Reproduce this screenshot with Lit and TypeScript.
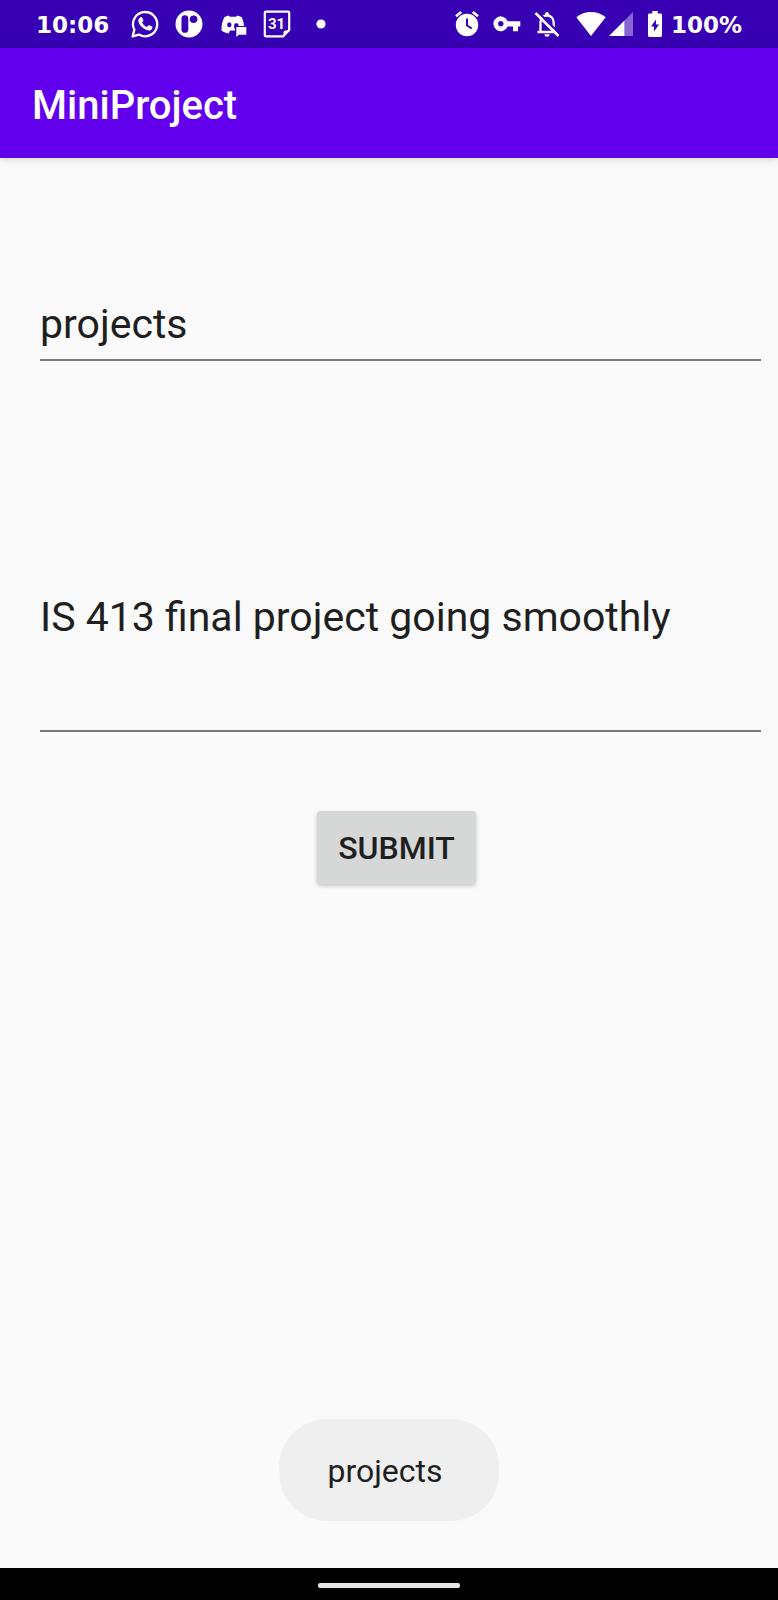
import { LitElement, html, css } from "lit";
import { customElement, state } from "lit/decorators.js";

@customElement("status-bar")
class StatusBar extends LitElement {
  static styles = css`
    :host {
      display: flex;
      justify-content: space-between;
      align-items: center;
      height: 48px;
      padding: 0 36px;
      background: #3700b3;
      color: #fff;
      font: bold 23px/28px "DejaVu Sans", sans-serif;
    }
    .group {
      display: flex;
      align-items: center;
    }
    .left {
      gap: 16px;
    }
    .time {
      margin-right: 6px;
    }
    .text {
      padding-top: 2px;
    }
    .right {
      gap: 12px;
    }
    .network {
      gap: 3px;
      margin: 0 3px;
    }
    .battery {
      gap: 9px;
    }
    svg {
      display: block;
      flex: none;
      fill: #fff;
    }
    .line {
      fill: none;
      stroke: #fff;
    }
    .cut {
      fill: #3700b3;
    }
    .cut-line {
      fill: none;
      stroke: #3700b3;
    }
    .dim {
      opacity: 0.4;
    }
    .day {
      font: bold 15px "Roboto", sans-serif;
      text-anchor: middle;
    }
  `;

  render() {
    return html`
      <div class="group left">
        <span class="time text">10:06</span>
        <svg width="28" height="28" viewBox="0 0 28 28" aria-label="WhatsApp">
          <path class="line" stroke-width="2.3" stroke-linejoin="round" d="M1.6 26.4 3.4 19.8A12.1 12.1 0 1 1 8 24.6Z" />
          <path d="M9.6 7.2c.5-.4 1.100-.3 1.500.3l1.200 2.600c.2.5.1.8-.2 1.200l-1 1.200c1.100 2.100 2.700 3.600 4.900 4.500l1.300-1.500c.3-.4.7-.4 1.100-.2l2.600 1.300c.5.3.5.6.4 1.100-.4 2-2 2.900-3.900 2.800-4.700-.6-9.500-5.100-10.200-9.400-.1-1.600.9-3.100 2.300-3.900Z" />
        </svg>
        <svg width="28" height="28" viewBox="0 0 28 28" aria-label="App">
          <circle cx="14" cy="14" r="13.500" />
          <rect class="cut" x="6.500" y="5.300" width="6.800" height="17.500" rx="3.400" />
          <circle class="cut" cx="18.600" cy="9.300" r="3.800" />
        </svg>
        <svg width="28" height="28" viewBox="0 0 28 28" aria-label="Discord">
          <path d="M9.500 5.500 11 6.700h6l1.500-1.200 4 1.500c1.500 2.500 2.300 5.500 2.500 9H16v4.500h-5L9.700 23.500C7 23 5 22.300 2.500 20.500c-.2-5.500.8-9.500 3-13.500Z" />
          <ellipse class="cut" cx="10.300" cy="14.800" rx="2.200" ry="2.500" />
          <path class="cut" d="M15.200 18.500v-4c.4-1.500 3.800-1.600 4.300 0v1.500H16.600v2.500Z" />
          <path d="M17.300 17h10v7.800H19.800l-2.500 2.200Z" />
        </svg>
        <svg width="28" height="28" viewBox="0 0 28 28" aria-label="Calendar">
          <path class="line" stroke-width="2.200" stroke-linejoin="round" d="M3 1.600h22a1.200 1.200 0 0 1 1.200 1.200V20L20 26.400H3a1.200 1.200 0 0 1-1.200-1.200V2.800A1.200 1.200 0 0 1 3 1.600Z" />
          <path d="M26 20.500 20.500 26v-3.500a2 2 0 0 1 2-2Z" />
          <text class="day" x="13.500" y="19">31</text>
        </svg>
        <svg width="28" height="28" viewBox="0 0 28 28" aria-label="More">
          <circle cx="14" cy="14" r="4.600" />
        </svg>
      </div>
      <div class="group right">
        <svg width="28" height="28" viewBox="0 0 28 28" aria-label="Alarm">
          <circle cx="14" cy="15" r="11.200" />
          <path class="line" stroke-width="2.600" d="M3 6.300 8.200 2M25 6.300 19.800 2" />
          <path class="cut-line" stroke-width="2" d="M14 8.500V15.500l4.800 3" />
        </svg>
        <svg width="28" height="28" viewBox="0 0 28 28" aria-label="VPN">
          <path fill-rule="evenodd" d="M14.700 11.200A7.400 7.400 0 1 0 14.700 16.400H20V21.200h5v-4.800h2.300v-5.200ZM7.800 11a2.700 2.700 0 1 1 0 5.400 2.700 2.700 0 0 1 0-5.400Z" />
        </svg>
        <svg width="28" height="28" viewBox="0 0 28 28" aria-label="Notifications off">
          <path class="line" stroke-width="2.300" d="M7.500 22V13c0-5 2.500-7.500 6.500-7.500s6.700 3 6.700 7.500v9M4.500 22h19" />
          <path d="M12.200 5.500V3.800a1.800 1.800 0 0 1 3.600 0v1.700ZM11.500 24.300h5a2.500 2.500 0 0 1-5 0Z" />
          <path class="cut-line" stroke-width="2.200" d="M4.500 1.500 27.500 24.500" />
          <path class="line" stroke-width="2.500" d="M2.500 3 25.500 26" />
        </svg>
        <div class="group network">
          <svg width="30" height="26" viewBox="0 0 30 26" aria-label="Wi-Fi">
            <path d="M15 25 .3 6.300C8.500-.8 21.500-.8 29.700 6.300Z" />
          </svg>
          <svg width="24" height="24" viewBox="0 0 24 24" aria-label="Signal">
            <path d="M0 24 15.500 8.500V24Z" />
            <path class="dim" d="M15.500 8.500 24 0V24H15.500Z" />
          </svg>
        </div>
        <div class="group battery">
          <svg width="14" height="26" viewBox="0 0 14 26" aria-label="Charging">
            <path fill-rule="evenodd" d="M4.300 0h5.400v2.500h2.800A1.400 1.400 0 0 1 14 3.900v20.700A1.400 1.400 0 0 1 12.600 26H1.400A1.400 1.400 0 0 1 0 24.600V3.900a1.400 1.400 0 0 1 1.400-1.400h2.900ZM8 8.500 3 15.500h3V20.500l5-7H8Z" />
          </svg>
          <span class="text">100%</span>
        </div>
      </div>
    `;
  }
}

@customElement("app-root")
class AppRoot extends LitElement {
  static styles = css`
    :host {
      display: flex;
      flex-direction: column;
      min-height: 100vh;
      background: #fafafa;
      color: #1f1f1f;
      font-family: "Roboto", sans-serif;
    }
    .app-bar {
      display: flex;
      align-items: center;
      height: 110px;
      padding: 0 32px;
      background: #6200ee;
      color: #fff;
      box-shadow: 0 1px 8px rgba(0, 0, 0, 0.16);
    }
    .title {
      margin: 0;
      padding-top: 6px;
      font-size: 40px;
      line-height: 48px;
      font-weight: 500;
    }
    .content {
      flex: 1;
      display: flex;
      flex-direction: column;
      padding: 136px 17px 48px 40px;
    }
    .field {
      box-sizing: border-box;
      display: block;
      width: 100%;
      margin: 0;
      padding: 0;
      border: 0;
      border-bottom: 2px solid #7a7a7a;
      border-radius: 0;
      outline: none;
      background: transparent;
      color: inherit;
      font: 400 41px/50px "Roboto", sans-serif;
      resize: none;
      overflow: hidden;
    }
    .name {
      height: 67px;
      padding-bottom: 6px;
    }
    .message {
      height: 144px;
      margin-top: 227px;
      padding-top: 4px;
    }
    .submit {
      align-self: center;
      margin: 79px 8px 0 0;
      height: 73px;
      padding: 0 21px;
      border: 0;
      border-radius: 4px;
      background: #d6d7d7;
      color: inherit;
      font: 500 32px/40px "Roboto", sans-serif;
      text-transform: uppercase;
      box-shadow: 0 2px 4px rgba(0, 0, 0, 0.22);
    }
    .toast-row {
      display: flex;
      justify-content: center;
      padding-bottom: 47px;
    }
    .toast {
      padding: 33px 56px 31px 48px;
      border-radius: 48px;
      background: #efefef;
      font-size: 32px;
      line-height: 38px;
    }
    .nav {
      display: flex;
      justify-content: center;
      align-items: center;
      height: 32px;
      padding-top: 2px;
      box-sizing: border-box;
      background: #000;
    }
    .handle {
      width: 142px;
      height: 5px;
      border-radius: 2px;
      background: #e6e6e6;
    }
  `;

  @state() private name = "projects";
  @state() private message = "IS 413 final project going smoothly";
  @state() private notice = "projects";

  private submit(e: Event) {
    e.preventDefault();
    this.notice = this.name;
  }

  render() {
    return html`
      <status-bar></status-bar>
      <header class="app-bar"><h1 class="title">MiniProject</h1></header>
      <form class="content" @submit=${this.submit}>
        <input
          class="field name"
          type="text"
          aria-label="Name"
          .value=${this.name}
          @input=${(e: Event) => (this.name = (e.target as HTMLInputElement).value)}
        />
        <textarea
          class="field message"
          aria-label="Message"
          spellcheck="false"
          .value=${this.message}
          @input=${(e: Event) => (this.message = (e.target as HTMLTextAreaElement).value)}
        ></textarea>
        <button class="submit" type="submit">Submit</button>
      </form>
      <div class="toast-row"><div class="toast" role="status">${this.notice}</div></div>
      <div class="nav"><div class="handle"></div></div>
    `;
  }
}
